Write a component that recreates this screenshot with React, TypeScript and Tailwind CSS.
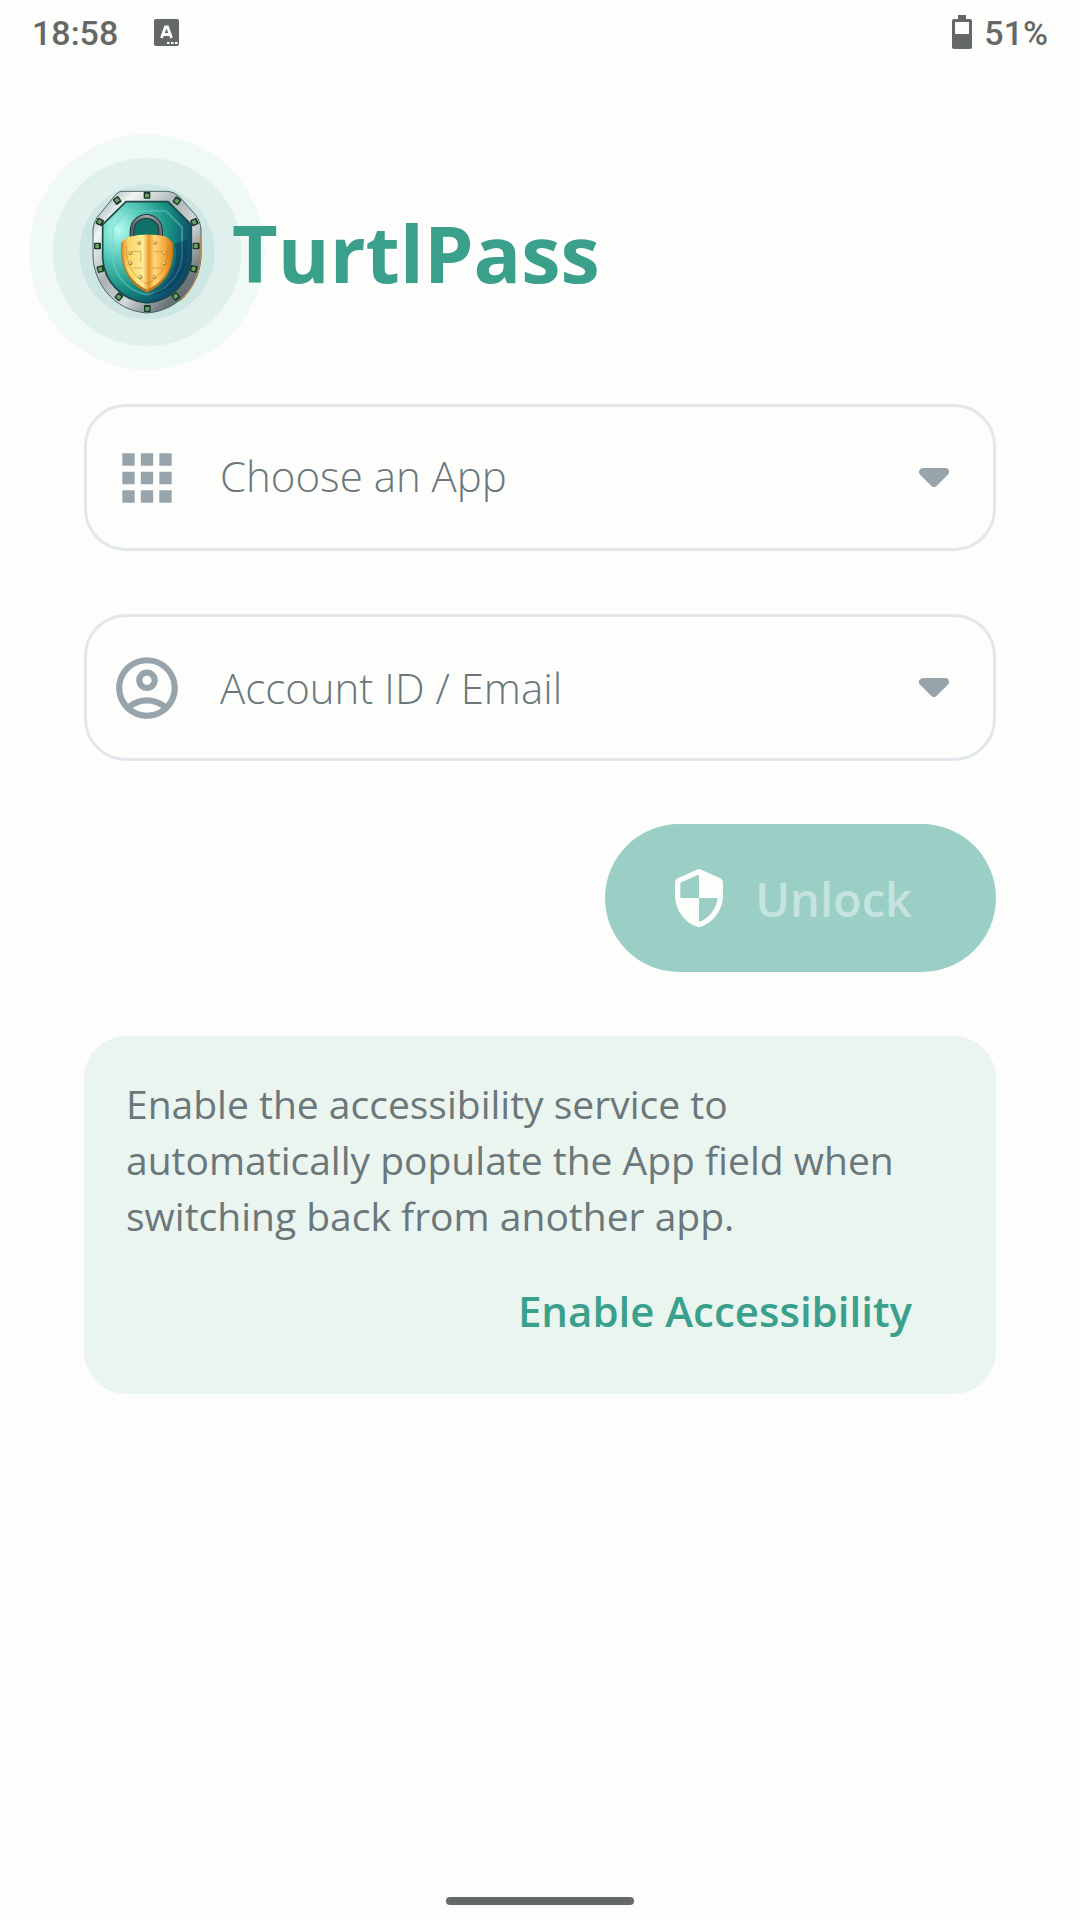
import { useState } from "react";
import type { ReactNode } from "react";
import { MdApps, MdOutlineAccountCircle } from "react-icons/md";

const rivets: [number, number, number][] = [
  [201, 45, 0],
  [291, 62, 35],
  [344, 126, 65],
  [349, 198, 90],
  [342, 267, 105],
  [288, 350, 140],
  [202, 385, 0],
  [117, 350, 40],
  [62, 267, 75],
  [53, 198, 90],
  [60, 126, 115],
  [112, 62, 145],
];

const studs: [number, number][] = [
  [177, 188],
  [225, 188],
  [151, 219],
  [151, 250],
  [253, 219],
  [253, 250],
  [181, 292],
  [222, 292],
];

function ShieldLogo() {
  return (
    <svg viewBox="-153 -138 708 708" className="size-[236px] shrink-0" aria-hidden="true">
      <defs>
        <linearGradient id="rim" x1="0" y1="0" x2="1" y2="1">
          <stop offset="0" stopColor="#7d8f90" />
          <stop offset="0.2" stopColor="#f2f6f6" />
          <stop offset="0.42" stopColor="#a9b3b5" />
          <stop offset="0.6" stopColor="#d4d9da" />
          <stop offset="0.8" stopColor="#6f777b" />
          <stop offset="1" stopColor="#2e5f68" />
        </linearGradient>
        <radialGradient id="face" cx="0.18" cy="0.28" r="0.95">
          <stop offset="0" stopColor="#b5fbf2" />
          <stop offset="0.3" stopColor="#55c8b8" />
          <stop offset="0.62" stopColor="#178c80" />
          <stop offset="0.87" stopColor="#0d4f6b" />
          <stop offset="1" stopColor="#0e3b5c" />
        </radialGradient>
        <linearGradient id="gold" x1="0" y1="0" x2="1" y2="0">
          <stop offset="0" stopColor="#e09a34" />
          <stop offset="0.12" stopColor="#fbd564" />
          <stop offset="0.42" stopColor="#ffec9a" />
          <stop offset="0.53" stopColor="#e8982a" />
          <stop offset="0.64" stopColor="#ffd67a" />
          <stop offset="0.85" stopColor="#f5a838" />
          <stop offset="1" stopColor="#d07a1c" />
        </linearGradient>
        <linearGradient id="shackle" x1="0" y1="0" x2="1" y2="0">
          <stop offset="0" stopColor="#5a6267" />
          <stop offset="0.5" stopColor="#a3a9ad" />
          <stop offset="1" stopColor="#6b7379" />
        </linearGradient>
      </defs>
      <circle cx="201" cy="216" r="354" fill="#f1f9f6" />
      <circle cx="201" cy="216" r="283" fill="#e0f0ed" />
      <circle cx="201" cy="216" r="203" fill="#cfe7e2" />
      <path
        d="M122 34H264Q284 36 298 50L346 104Q361 122 363 150V230C360 310 300 392 201 399C102 392 42 310 39 230V150Q41 122 58 104L104 48Q112 36 122 34Z"
        fill="url(#rim)"
        stroke="#4d6466"
        strokeWidth="3"
      />
      <path d="M362 170V230C358 285 335 330 300 362" fill="none" stroke="#b3854b" strokeWidth="4" />
      <path
        d="M138 65H264L334 134V235C330 300 280 362 201 369C122 362 72 300 68 235V134Z"
        fill="url(#face)"
        stroke="#1c4a48"
        strokeWidth="5"
      />
      <path
        d="M144 93H258L306 142V232C302 282 262 334 201 344C140 334 102 282 98 232V142Z"
        fill="none"
        stroke="#6fd6c8"
        strokeWidth="5"
        opacity="0.5"
      />
      <path d="M284 190C300 250 270 320 205 345C270 345 315 290 322 225V180Z" fill="#0c3359" opacity="0.45" />
      {rivets.map(([x, y, angle]) => (
        <g key={`${x}-${y}`} transform={`translate(${x} ${y}) rotate(${angle})`}>
          <rect x="-10" y="-10" width="20" height="21" rx="3" fill="#1b3a2b" />
          <rect x="-6" y="-4" width="12" height="11" rx="2" fill="#6da268" />
        </g>
      ))}
      <path d="M156 184V152A43 43 0 0 1 242 152V184" fill="#0e7168" stroke="#2b3236" strokeWidth="14" />
      <path d="M156 184V152A43 43 0 0 1 242 152V184" fill="none" stroke="url(#shackle)" strokeWidth="8" />
      <path
        d="M148 174Q201 160 256 172Q268 178 279 190C284 250 268 308 201 338C136 308 120 250 124 188Q136 178 148 174Z"
        fill="#bd7a20"
      />
      <path
        d="M148 170Q201 158 256 169Q268 176 277 188C281 246 265 300 201 329C139 300 123 246 127 184Q138 174 148 170Z"
        fill="url(#gold)"
      />
      <path
        d="M140 196C138 245 152 286 201 312C250 286 266 245 264 196M156 215H182V244M222 215H248M158 264H188M214 264H246"
        fill="none"
        stroke="#b97a22"
        strokeWidth="3"
        opacity="0.5"
      />
      {studs.map(([x, y]) => (
        <g key={`${x}-${y}`}>
          <circle cx={x} cy={y} r="6" fill="#a5823a" />
          <circle cx={x - 1} cy={y - 1} r="4" fill="#e9cf86" />
        </g>
      ))}
    </svg>
  );
}

function CaretDown() {
  return (
    <svg viewBox="0 0 30 20" className="h-5 w-[30px]" aria-hidden="true">
      <path
        d="M4 4H26L15 15Z"
        fill="#98a4ac"
        stroke="#98a4ac"
        strokeWidth="8"
        strokeLinejoin="round"
      />
    </svg>
  );
}

function StatusBar() {
  return (
    <div className="flex h-16 items-center justify-between px-8 font-['Roboto',sans-serif] text-[34px] leading-none font-medium text-[#656966]">
      <div className="flex items-center gap-9">
        <span className="pt-0.5">18:58</span>
        <svg viewBox="0 0 25 27" className="h-[27px] w-[25px]" aria-hidden="true">
          <rect width="25" height="27" rx="2" fill="#656966" />
          <path d="M7.5 19L11.5 8H13.5L17.5 19M9 15.5H16" fill="none" stroke="#fdfefc" strokeWidth="2.8" />
          <path d="M13 23h2.5v2H13zM17 23h2.5v2H17zM21 23h2.5v2H21z" fill="#fdfefc" />
        </svg>
      </div>
      <div className="flex items-center gap-3">
        <svg viewBox="0 0 20 34" className="h-[34px] w-5" aria-hidden="true">
          <path
            fillRule="evenodd"
            d="M6 0H14V4H18Q20 4 20 6V32Q20 34 18 34H2Q0 34 0 32V6Q0 4 2 4H6ZM3 7V19H17V7Z"
            fill="#656966"
          />
        </svg>
        <span className="pt-0.5">51%</span>
      </div>
    </div>
  );
}

function Field({ icon, children }: { icon: ReactNode; children: ReactNode }) {
  return (
    <div className="flex h-[147px] items-center gap-9 rounded-[42px] border-[3px] border-[#e1e7ea] pr-11 pl-[23px] focus-within:border-[#3aa08b]">
      <span className="shrink-0 text-[74px] text-[#98a4ac]">{icon}</span>
      {children}
    </div>
  );
}

export default function App() {
  const [account, setAccount] = useState("");

  return (
    <div className="flex min-h-screen flex-col bg-[#fdfefc] font-['Open_Sans',sans-serif]">
      <StatusBar />
      <header className="flex items-center pt-[70px] pl-[29px]">
        <ShieldLogo />
        <h1 className="relative -ml-[33px] text-[79px] leading-none font-bold text-[#3aa08b]">TurtlPass</h1>
      </header>

      <main className="flex flex-1 flex-col px-[84px] pt-[34px]">
        <form className="flex flex-col gap-[63px]" onSubmit={(e) => e.preventDefault()}>
          <Field icon={<MdApps />}>
            <div className="relative flex flex-1 items-center">
              <select
                aria-label="Choose an App"
                className="h-[100px] w-full appearance-none bg-transparent pb-1 text-[42px] leading-[56px] font-light text-[#6b777b] outline-none"
              >
                <option>Choose an App</option>
              </select>
              <span className="pointer-events-none absolute right-0">
                <CaretDown />
              </span>
            </div>
          </Field>
          <Field icon={<MdOutlineAccountCircle />}>
            <input
              type="text"
              aria-label="Account ID / Email"
              placeholder="Account ID / Email"
              value={account}
              onChange={(e) => setAccount(e.target.value)}
              className="h-[100px] min-w-0 flex-1 bg-transparent text-[42px] leading-[56px] font-light text-[#6b777b] outline-none placeholder:text-[#6b777b]"
            />
            <button type="button" aria-label="Account ID / Email">
              <CaretDown />
            </button>
          </Field>
          <button
            type="submit"
            disabled
            className="flex h-[148px] items-center gap-6 self-end rounded-full bg-[#9bcec5] pr-[84px] pl-[62px] text-[47px] leading-none font-semibold text-[#c5e4df]"
          >
            <svg viewBox="0 0 24 24" className="size-16" fill="#fdfefc" aria-hidden="true">
              <path d="M11.19 1.36l-7 3.11C3.47 4.79 3 5.51 3 6.3V11c0 5.55 3.84 10.74 9 12 5.16-1.26 9-6.45 9-12V6.3c0-.79-.47-1.51-1.19-1.83l-7-3.11c-.51-.23-1.11-.23-1.62 0zM12 11.99h7c-.53 4.12-3.28 7.79-7 8.94V12H5V6.3l7-3.11v8.8z" />
            </svg>
            <span className="pt-0.5">Unlock</span>
          </button>
        </form>

        <section className="mt-16 flex flex-col rounded-[42px] bg-[#eaf5f0] px-[42px] pt-10 pb-[51px]">
          <p className="text-[39px] leading-[56px] text-[#6b777b]">
            Enable the accessibility service to automatically populate the App field when switching back
            from another app.
          </p>
          <button
            type="button"
            className="mt-[35px] mr-[42px] self-end text-[42px] leading-[64px] font-semibold text-[#3aa08b]"
          >
            Enable Accessibility
          </button>
        </section>
      </main>

      <footer className="flex justify-center pb-[15px]">
        <div className="h-2 w-[188px] rounded-full bg-[#656966]" />
      </footer>
    </div>
  );
}
